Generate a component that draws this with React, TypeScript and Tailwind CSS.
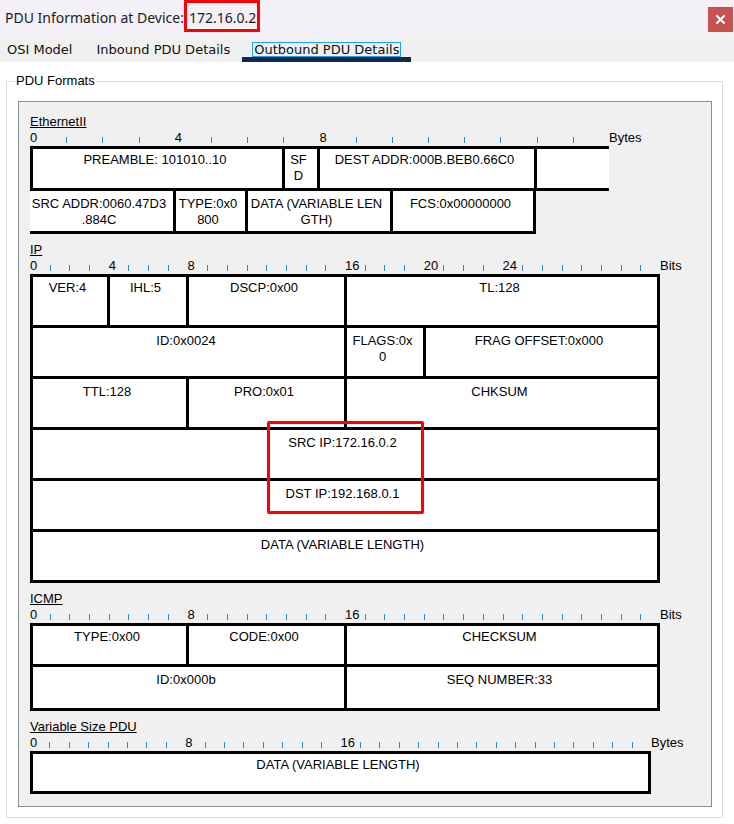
import React from 'react'

const sans = "font-['Liberation_Sans',Arial,sans-serif]"

type CellDef = { w: string; lines: string[]; open?: boolean }

function Cell({ w, lines, pt, open }: { w: string; lines: string[]; pt: string; open?: boolean }) {
    return (
        <div className={`${w} shrink-0 bg-white ${open ? '' : 'border-r-[3px] border-black'} ${pt} pl-[2px] pr-[7px] flex flex-col`}>
            {lines.map((l, i) => (
                <div key={i} className="flex justify-center whitespace-nowrap leading-4">{l}</div>
            ))}
        </div>
    )
}

function Row({ cells, className, pt }: { cells: CellDef[]; className: string; pt: string }) {
    return (
        <div className={`flex border-black bg-white ${className}`}>
            {cells.map((c, i) => <Cell key={i} w={c.w} lines={c.lines} pt={pt} open={c.open} />)}
        </div>
    )
}

function Ruler({ count, unit, labels, end }: { count: number; unit: string; labels: Record<number, string>; end: string }) {
    const items = []
    for (let i = 0; i < count; i++) {
        items.push(
            <div key={i} className={`${unit} shrink-0 h-4`}>
                {labels[i] !== undefined
                    ? <span className="block leading-4 whitespace-nowrap">{labels[i]}</span>
                    : <div className="mt-[7px] w-px h-[6px] bg-[#3d83cc]" />}
            </div>
        )
    }
    return (
        <div className="flex h-4">
            {items}
            <span className="leading-4 whitespace-nowrap">{end}</span>
        </div>
    )
}

function Label({ text }: { text: string }) {
    return <div className="leading-4 h-4"><span className="underline">{text}</span></div>
}

function CloseIcon() {
    return (
        <svg width="9" height="9" viewBox="0 0 9 9">
            <path d="M1 1 L8 8 M8 1 L1 8" stroke="white" strokeWidth="2" strokeLinecap="square" />
        </svg>
    )
}

export default function App() {
    return (
        <div className="w-[734px] h-[824px] bg-white overflow-hidden text-black">
            {/* title bar */}
            <div className="h-[36px] bg-[#f3f0f7] flex items-start font-['Noto_Sans',sans-serif] text-[14px] text-[#1b1b1b]">
                <div className="h-[34px] flex items-center pl-[5px]">PDU Information at Device:</div>
                <div className="h-[32px] border-[3px] border-[#ff0000] flex items-center pt-[2px] pl-[2px] pr-[1px]">172.16.0.2</div>
                <div className="flex-1" />
                <button className="mt-[7px] mr-[1px] w-[25px] h-[25px] bg-[#c75050] flex items-center justify-center">
                    <CloseIcon />
                </button>
            </div>

            {/* tabs */}
            <div className="h-[26px] bg-[#f0f0f0] flex items-start font-['DejaVu_Sans',sans-serif] text-[13px] text-[#111]">
                <div className="ml-[7px] pt-[7px] leading-[13px]">OSI Model</div>
                <div className="ml-[24px] pt-[7px] leading-[13px]">Inbound PDU Details</div>
                <div className="ml-[12px] px-[10px] pt-[6px] border-b-[5px] border-[#13294b]">
                    <div className="border border-[#1aa3e8] px-[1px] leading-[13px]">Outbound PDU Details</div>
                </div>
            </div>

            {/* group box */}
            <div className={`${sans} text-[13px] relative mt-[19px] ml-[6px] w-[717px] border border-[#dcdcdc] pt-[19px] pl-[11px] pr-[10px] pb-[10px]`}>
                <span className="absolute top-[-9px] left-[8px] px-[1px] bg-white leading-4">PDU Formats</span>

                <div className="w-[694px] border border-[#8a8f98] bg-[#f0f0f0] pl-[11px] pt-[12px] pb-[12px]">
                    {/* Ethernet */}
                    <Label text="EthernetII" />
                    <Ruler count={16} unit="w-[36.19px]" labels={{ 0: '0', 4: '4', 8: '8' }} end="Bytes" />
                    <Row
                        className="w-[579px] h-[45px] border-l-[3px] border-t-[3px] border-b-[3px]"
                        pt="pt-[3px]"
                        cells={[
                            { w: 'w-[252px]', lines: ['PREAMBLE: 101010..10'] },
                            { w: 'w-[35px]', lines: ['SF', 'D'] },
                            { w: 'w-[217px]', lines: ['DEST ADDR:000B.BEB0.66C0'] },
                            { w: 'w-[72px]', lines: [], open: true },
                        ]}
                    />
                    <Row
                        className="w-[506px] h-[43px] border-b-[3px]"
                        pt="pt-[5px]"
                        cells={[
                            { w: 'w-[146px]', lines: ['SRC ADDR:0060.47D3', '.884C'] },
                            { w: 'w-[72px]', lines: ['TYPE:0x0', '800'] },
                            { w: 'w-[145px]', lines: ['DATA (VARIABLE LEN', 'GTH)'] },
                            { w: 'w-[143px]', lines: ['FCS:0x00000000'] },
                        ]}
                    />

                    {/* IP */}
                    <div className="mt-[8px]">
                        <Label text="IP" />
                        <Ruler count={32} unit="w-[19.69px]" labels={{ 0: '0', 4: '4', 8: '8', 16: '16', 20: '20', 24: '24' }} end="Bits" />
                        <div className="relative w-[630px]">
                            <Row className="w-[630px] h-[51px] border-l-[3px] border-t-[3px]" pt="pt-[3px]" cells={[
                                { w: 'w-[77px]', lines: ['VER:4'] },
                                { w: 'w-[79px]', lines: ['IHL:5'] },
                                { w: 'w-[158px]', lines: ['DSCP:0x00'] },
                                { w: 'w-[313px]', lines: ['TL:128'] },
                            ]} />
                            <Row className="w-[630px] h-[51px] border-l-[3px] border-t-[3px]" pt="pt-[5px]" cells={[
                                { w: 'w-[314px]', lines: ['ID:0x0024'] },
                                { w: 'w-[79px]', lines: ['FLAGS:0x', '0'] },
                                { w: 'w-[234px]', lines: ['FRAG OFFSET:0x000'] },
                            ]} />
                            <Row className="w-[630px] h-[51px] border-l-[3px] border-t-[3px]" pt="pt-[5px]" cells={[
                                { w: 'w-[156px]', lines: ['TTL:128'] },
                                { w: 'w-[158px]', lines: ['PRO:0x01'] },
                                { w: 'w-[313px]', lines: ['CHKSUM'] },
                            ]} />
                            <Row className="w-[630px] h-[51px] border-l-[3px] border-t-[3px]" pt="pt-[5px]" cells={[
                                { w: 'w-[627px]', lines: ['SRC IP:172.16.0.2'] },
                            ]} />
                            <Row className="w-[630px] h-[51px] border-l-[3px] border-t-[3px]" pt="pt-[5px]" cells={[
                                { w: 'w-[627px]', lines: ['DST IP:192.168.0.1'] },
                            ]} />
                            <Row className="w-[630px] h-[54px] border-l-[3px] border-t-[3px] border-b-[3px]" pt="pt-[5px]" cells={[
                                { w: 'w-[627px]', lines: ['DATA (VARIABLE LENGTH)'] },
                            ]} />
                            {/* highlight annotation */}
                            <div className="absolute left-[237px] top-[147px] w-[157px] h-[93px] border-[3px] border-[#ff0000] rounded-[2px]" />
                        </div>
                    </div>

                    {/* ICMP */}
                    <div className="mt-[8px]">
                        <Label text="ICMP" />
                        <Ruler count={32} unit="w-[19.69px]" labels={{ 0: '0', 8: '8', 16: '16' }} end="Bits" />
                        <Row className="w-[630px] h-[41px] border-l-[3px] border-t-[3px]" pt="pt-[3px]" cells={[
                            { w: 'w-[156px]', lines: ['TYPE:0x00'] },
                            { w: 'w-[158px]', lines: ['CODE:0x00'] },
                            { w: 'w-[313px]', lines: ['CHECKSUM'] },
                        ]} />
                        <Row className="w-[630px] h-[47px] border-l-[3px] border-t-[3px] border-b-[3px]" pt="pt-[5px]" cells={[
                            { w: 'w-[314px]', lines: ['ID:0x000b'] },
                            { w: 'w-[313px]', lines: ['SEQ NUMBER:33'] },
                        ]} />
                    </div>

                    {/* Variable size */}
                    <div className="mt-[8px]">
                        <Label text="Variable Size PDU" />
                        <Ruler count={32} unit="w-[19.41px]" labels={{ 0: '0', 8: '8', 16: '16' }} end="Bytes" />
                        <Row className="w-[621px] h-[43px] border-l-[3px] border-t-[3px] border-b-[3px]" pt="pt-[3px]" cells={[
                            { w: 'w-[618px]', lines: ['DATA (VARIABLE LENGTH)'] },
                        ]} />
                    </div>
                </div>
            </div>
        </div>
    )
}
